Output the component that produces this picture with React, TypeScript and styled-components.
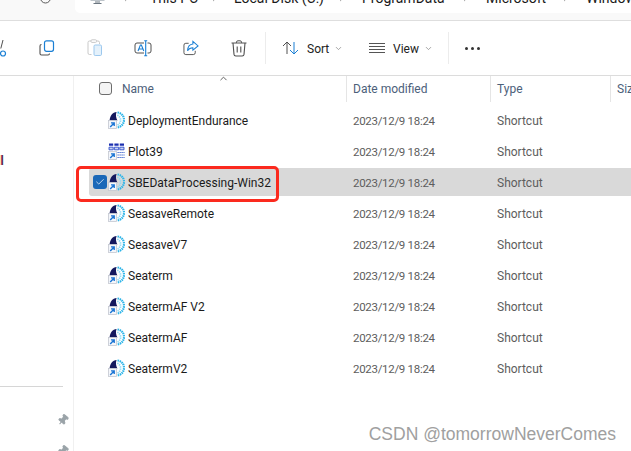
import React from "react";
import styled, { createGlobalStyle } from "styled-components";
import { ChevronDown, ChevronUp, ChevronRight, Check, Pin } from "lucide-react";

const Global = createGlobalStyle`
  html, body { margin: 0; padding: 0; background: #fff; overflow: hidden; }
  body { font-family: Roboto, "Open Sans", "Liberation Sans", sans-serif; }
`;

const Page = styled.div`
  position: relative;
  width: 631px;
  height: 451px;
  overflow: hidden;
  display: flex;
  flex-direction: column;
  background: #fff;
  color: #1b1b1b;
`;

const AddressBand = styled.div`
  height: 20px;
  flex: none;
  background: #f9f9f9;
  border-bottom: 1px solid #dedede;
  display: flex;
  align-items: flex-start;
  overflow: hidden;
`;

const RefreshSlot = styled.div`
  width: 75px;
  flex: none;
  padding-left: 40px;
  box-sizing: border-box;
  margin-top: -8px;
  color: #555;
  display: flex;
`;

const AddressBox = styled.div`
  flex: 1;
  min-width: 0;
  height: 13px;
  background: #fff;
  border-bottom-left-radius: 5px;
  padding-left: 15px;
  display: flex;
  align-items: flex-start;
  overflow: hidden;
  font-size: 14px;
  line-height: 13px;
  white-space: nowrap;
`;

const PcSlot = styled.div`
  width: 15px;
  flex: none;
  margin-top: -9px;
  display: flex;
`;

const Crumb = styled.span<{ $w: number }>`
  flex: none;
  width: ${(p) => p.$w}px;
  margin-top: -8px;
`;

const CrumbSep = styled.div<{ $w: number; $pad?: number }>`
  flex: none;
  width: ${(p) => p.$w}px;
  padding-left: ${(p) => p.$pad ?? 0}px;
  box-sizing: border-box;
  margin-top: -6px;
  color: #444;
  display: flex;
`;

const Toolbar = styled.div`
  height: 54px;
  flex: none;
  display: flex;
  align-items: center;
  border-bottom: 1px solid #dcdcdc;
`;

const CutSlot = styled.div`
  flex: none;
  width: 23px;
  display: flex;
  align-items: center;
  margin-top: 1px;
`;

const ToolIcon = styled.div`
  flex: none;
  width: 48px;
  display: flex;
  justify-content: center;
  align-items: center;
`;

const Sep = styled.div<{ $ml?: number }>`
  width: 1px;
  height: 32px;
  margin-left: ${(p) => p.$ml ?? 0}px;
  background: #ececec;
  flex: none;
`;

const ToolLabel = styled.span`
  font-size: 12px;
  margin-left: 8px;
  padding-top: 2px;
  color: #222;
`;

const ToolBtn = styled.div<{ $w: number }>`
  flex: none;
  width: ${(p) => p.$w}px;
  display: flex;
  align-items: center;
  padding-left: 16px;
  box-sizing: border-box;
`;

const Caret = styled.span`
  display: flex;
  margin-left: 5px;
  color: #888;
`;

const Dots = styled.div`
  display: flex;
  gap: 3px;
  padding-left: 16px;
`;

const Dot = styled.span`
  width: 3px;
  height: 3px;
  border-radius: 50%;
  background: #333;
`;

const Body = styled.div`
  flex: 1;
  display: flex;
  min-height: 0;
`;

const Nav = styled.div`
  width: 74px;
  flex: none;
  box-sizing: border-box;
  border-right: 1px solid #f0f0f0;
  position: relative;
`;

const NavRed = styled.span`
  position: absolute;
  left: 1px;
  top: 78px;
  font-size: 12px;
  line-height: 14px;
  color: #2a1040;
  text-shadow: -1px 0 #c0392b;
`;

const NavRule = styled.div`
  position: absolute;
  left: 0;
  width: 63px;
  top: 310px;
  height: 1px;
  background: #d6d6d6;
`;

const NavPin = styled.div<{ $top: number }>`
  position: absolute;
  left: 57px;
  top: ${(p) => p.$top}px;
  color: #9aa3a8;
  display: flex;
`;

const Main = styled.div`
  flex: 1;
  min-width: 0;
  position: relative;
`;

const HeaderRow = styled.div`
  height: 26px;
  display: flex;
  align-items: center;
  font-size: 12px;
  color: #4c607a;
`;

const HeaderCell = styled.div<{ $w: number; $pad: number; $line?: boolean }>`
  flex: none;
  width: ${(p) => p.$w}px;
  height: 26px;
  box-sizing: border-box;
  padding-left: ${(p) => p.$pad}px;
  padding-bottom: 2px;
  border-right: ${(p) => (p.$line ? "1px solid #e5e5e5" : "none")};
  display: flex;
  align-items: center;
  white-space: nowrap;
  overflow: hidden;
`;

const HeaderText = styled.span`
  padding-top: 2px;
`;

const SortCaret = styled.div`
  position: absolute;
  left: 144px;
  top: -3px;
  color: #555;
  display: flex;
`;

const HeadBox = styled.div`
  width: 13px;
  height: 13px;
  box-sizing: border-box;
  border: 1px solid #6d6d6d;
  border-radius: 3px;
  background: #f4f4f4;
  margin-right: 10px;
  flex: none;
`;

const Rows = styled.div`
  margin-top: 4px;
  display: flex;
  flex-direction: column;
  gap: 3px;
`;

const Row = styled.div<{ $selected?: boolean }>`
  height: 28px;
  margin-left: 15px;
  display: flex;
  align-items: center;
  font-size: 12px;
  background: ${(p) => (p.$selected ? "#d9d9d9" : "transparent")};
  border-radius: 3px 0 0 3px;
  white-space: nowrap;
`;

const CheckCell = styled.div`
  width: 19px;
  flex: none;
  padding-left: 4px;
  box-sizing: border-box;
  display: flex;
`;

const CheckBox = styled.div`
  width: 14px;
  height: 14px;
  border-radius: 3px;
  background: #1a68b8;
  color: #dfeaf6;
  display: flex;
  align-items: center;
  justify-content: center;
`;

const FileName = styled.div`
  width: 245px;
  flex: none;
  display: flex;
  align-items: center;
  gap: 3px;
  color: #1b1b1b;
`;

const FileLabel = styled.span`
  padding-top: 2px;
`;

const Meta = styled.div<{ $w: number; $tight?: boolean }>`
  flex: none;
  width: ${(p) => p.$w}px;
  color: #5d5d5d;
  font-size: ${(p) => (p.$tight ? "11.5px" : "12px")};
  letter-spacing: ${(p) => (p.$tight ? "-0.3px" : "0")};
  padding-top: 1px;
`;

const Highlight = styled.div`
  position: absolute;
  left: 2px;
  top: 90px;
  width: 203px;
  height: 36px;
  box-sizing: border-box;
  border: 3px solid #fb2a1e;
  border-radius: 5px;
`;

const Watermark = styled.div`
  position: absolute;
  right: 15px;
  top: 424px;
  font-family: "Liberation Sans", Arial, sans-serif;
  font-size: 17.5px;
  color: #a0a0a0;
  white-space: nowrap;
`;

const ShortcutBadge = () => (
  <>
    <rect x="0.5" y="9.5" width="8" height="8" fill="#f4f6fa" stroke="#c4c8d0" strokeWidth="0.8" />
    <path d="M2.2 16l3.4-3.4M3 11.9h3.2v3.2" fill="none" stroke="#1a74d4" strokeWidth="1.4" />
  </>
);

const SbeIcon = () => (
  <svg width="17" height="18" viewBox="0 0 17 18">
    <path d="M8.6 1C4.6 1.4 2 4.6 1.6 9.5L9.4 9.5C8 7 7.4 3.6 8.6 1Z" fill="#14185e" />
    <path d="M9.5 1.5C13 1.8 16 4.8 16 8.8 16 13 13 15.8 9.5 16.4" fill="none" stroke="#2cb4e8" strokeWidth="2.2" strokeDasharray="1.5 0.7" />
    <path d="M9.4 4C11 5 12.6 7 12.6 9 12.6 11 11.4 13 9.6 14.2" fill="none" stroke="#8ad8f4" strokeWidth="1.8" strokeDasharray="1.3 0.9" />
    <ShortcutBadge />
  </svg>
);

const PlotIcon = () => (
  <svg width="17" height="18" viewBox="0 0 17 18">
    <path d="M1 1.5h4.2v2.2H1zM6.4 1.5h4.2v2.2H6.4zM11.8 1.5H16v2.2h-4.2z" fill="#1b2fb0" />
    <path d="M1 5.2h4.2v2.6H1zM6.4 5.2h4.2v2.6H6.4zM11.8 5.2H16v2.6h-4.2z" fill="#c8d4f4" stroke="#2040c8" strokeWidth="0.8" />
    <path d="M9.5 10.5H16.5M9.5 13H16.5M9.5 15.5H16.5" stroke="#2a55c8" strokeWidth="1.1" strokeDasharray="1.2 0.8" />
    <ShortcutBadge />
  </svg>
);

const RefreshIcon = () => (
  <svg width="11" height="12" viewBox="0 0 11 12" fill="none">
    <circle cx="5.5" cy="6" r="5" stroke="#5a5a5a" strokeWidth="1" />
  </svg>
);

const PcIcon = () => (
  <svg width="15" height="13" viewBox="0 0 15 13" fill="none">
    <rect x="0.5" y="0.5" width="14" height="9" fill="#7d8b96" />
    <path d="M5 11h5M3.5 12.5h8" stroke="#6b7680" strokeWidth="1.2" />
  </svg>
);

const PasteIcon = () => (
  <svg width="16" height="18" viewBox="0 0 16 18" fill="none">
    <path d="M4.5 15.5H2.5A1.5 1.5 0 0 1 1 14V3.5A1.5 1.5 0 0 1 2.5 2H11A1.5 1.5 0 0 1 12.5 3.5V5" stroke="#c9c9c9" strokeWidth="1" />
    <rect x="4" y="0.8" width="5.5" height="2.6" rx="1" stroke="#c9c9c9" fill="#fff" />
    <rect x="7" y="6" width="7.5" height="10.5" rx="1.2" stroke="#9cc8ee" fill="#e4f1fb" />
  </svg>
);

const CopyIcon = () => (
  <svg width="16" height="16" viewBox="0 0 16 16" fill="none">
    <path d="M2.5 4.5A1.5 1.5 0 0 0 1 6v7.5A1.5 1.5 0 0 0 2.5 15h6.5A1.5 1.5 0 0 0 10.5 13.5" stroke="#505050" strokeWidth="1.1" />
    <rect x="5.5" y="0.8" width="9" height="10.5" rx="2" stroke="#1a7fd4" strokeWidth="1.2" />
  </svg>
);

const RenameIcon = () => (
  <svg width="18" height="17" viewBox="0 0 18 17" fill="none">
    <path d="M10 3H3A2 2 0 0 0 1 5V11A2 2 0 0 0 3 13H10M13.5 3H15A2 2 0 0 1 17 5V11A2 2 0 0 1 15 13H13.5" stroke="#505050" strokeWidth="1" />
    <path d="M4 11L6.4 5H7.4L9.8 11M5 9h3.8" stroke="#1a7fd4" strokeWidth="1.1" />
    <path d="M11.7 1V15.5M10.2 .7H13.2M10.2 15.8H13.2" stroke="#1a7fd4" strokeWidth="1.1" />
  </svg>
);

const ShareIcon = () => (
  <svg width="16" height="16" viewBox="0 0 17 16" fill="none">
    <path d="M6 3H3A2 2 0 0 0 1 5V13A2 2 0 0 0 3 15H11A2 2 0 0 0 13 13V11" stroke="#505050" strokeWidth="1" />
    <path d="M10.5 1L16 5.8 10.5 10.4V7.8C7.5 7.8 6 9 4.8 11 5 7 7 4 10.5 3.7Z" stroke="#1a7fd4" strokeWidth="1.1" />
  </svg>
);

const TrashIcon = () => (
  <svg width="16" height="17" viewBox="0 0 16 17" fill="none">
    <path d="M0.5 3h15M5.5 3V2.2A1.4 1.4 0 0 1 6.9 .8H9.1A1.4 1.4 0 0 1 10.5 2.2V3" stroke="#505050" strokeWidth="1" />
    <path d="M2 3L3 14.4A1.8 1.8 0 0 0 4.8 16H11.2A1.8 1.8 0 0 0 13 14.4L14 3" stroke="#505050" strokeWidth="1.1" />
    <path d="M6.2 6.5v6M9.8 6.5v6" stroke="#505050" strokeWidth="1.1" />
  </svg>
);

const CutIcon = () => (
  <svg width="8" height="18" viewBox="0 0 8 18" fill="none">
    <path d="M3 0L0.8 8.5" stroke="#505050" strokeWidth="1" />
    <circle cx="3" cy="13.5" r="2.5" stroke="#1a7fd4" strokeWidth="1.2" />
  </svg>
);

const SortIcon = () => (
  <svg width="17" height="14" viewBox="0 0 17 14" fill="none">
    <path d="M5 13V1M1 5l4-4 4 4" stroke="#505050" strokeWidth="1" />
    <path d="M12 1v12M8 9l4 4 4-4" stroke="#1a7fd4" strokeWidth="1" />
  </svg>
);

const ViewIcon = () => (
  <svg width="16" height="10" viewBox="0 0 16 10" fill="none">
    <path d="M0 .5h16M0 3.5h16M0 6.5h16M0 9.5h16" stroke="#555" strokeWidth="1" />
  </svg>
);

const files = ["DeploymentEndurance", "Plot39", "SBEDataProcessing-Win32", "SeasaveRemote", "SeasaveV7", "Seaterm", "SeatermAF V2", "SeatermAF", "SeatermV2"];

const TinyChevron = () => <ChevronRight size={9} strokeWidth={1.4} />;

export default function App() {
  return (
    <Page>
      <Global />
      <AddressBand>
        <RefreshSlot><RefreshIcon /></RefreshSlot>
        <AddressBox>
          <PcSlot><PcIcon /></PcSlot>
          <CrumbSep $w={45} $pad={17}><TinyChevron /></CrumbSep>
          <Crumb $w={60}>This PC</Crumb>
          <CrumbSep $w={24}><TinyChevron /></CrumbSep>
          <Crumb $w={103}>Local Disk (C:)</Crumb>
          <CrumbSep $w={25}><TinyChevron /></CrumbSep>
          <Crumb $w={99}>ProgramData</Crumb>
          <CrumbSep $w={25}><TinyChevron /></CrumbSep>
          <Crumb $w={75}>Microsoft</Crumb>
          <CrumbSep $w={25}><TinyChevron /></CrumbSep>
          <Crumb $w={60}>Windows</Crumb>
        </AddressBox>
      </AddressBand>
      <Toolbar>
        <CutSlot><CutIcon /></CutSlot>
        <ToolIcon><CopyIcon /></ToolIcon>
        <ToolIcon><PasteIcon /></ToolIcon>
        <ToolIcon><RenameIcon /></ToolIcon>
        <ToolIcon><ShareIcon /></ToolIcon>
        <ToolIcon><TrashIcon /></ToolIcon>
        <Sep $ml={2} />
        <ToolBtn $w={87}>
          <SortIcon /><ToolLabel>Sort</ToolLabel><Caret><ChevronDown size={9} /></Caret>
        </ToolBtn>
        <ToolBtn $w={95}>
          <ViewIcon /><ToolLabel>View</ToolLabel><Caret><ChevronDown size={9} /></Caret>
        </ToolBtn>
        <Sep />
        <Dots><Dot /><Dot /><Dot /></Dots>
      </Toolbar>
      <Body>
        <Nav>
          <NavRed>l</NavRed>
          <NavRule />
          <NavPin $top={338}><Pin size={12} fill="currentColor" style={{ transform: "rotate(40deg)" }} /></NavPin>
          <NavPin $top={369}><Pin size={12} fill="currentColor" style={{ transform: "rotate(40deg)" }} /></NavPin>
        </Nav>
        <Main>
          <SortCaret><ChevronUp size={11} /></SortCaret>
          <HeaderRow>
            <HeaderCell $w={273} $pad={25} $line>
              <HeadBox /><HeaderText>Name</HeaderText>
            </HeaderCell>
            <HeaderCell $w={144} $pad={6} $line><HeaderText>Date modified</HeaderText></HeaderCell>
            <HeaderCell $w={120} $pad={6} $line><HeaderText>Type</HeaderText></HeaderCell>
            <HeaderCell $w={20} $pad={6}><HeaderText>Size</HeaderText></HeaderCell>
          </HeaderRow>
          <Rows>
            {files.map((f, i) => (
              <Row key={f} $selected={i === 2}>
                <CheckCell>{i === 2 && <CheckBox><Check size={10} strokeWidth={2} /></CheckBox>}</CheckCell>
                <FileName>{i === 1 ? <PlotIcon /> : <SbeIcon />}<FileLabel>{f}</FileLabel></FileName>
                <Meta $w={144} $tight>2023/12/9 18:24</Meta>
                <Meta $w={120}>Shortcut</Meta>
              </Row>
            ))}
          </Rows>
          <Highlight />
        </Main>
      </Body>
      <Watermark>CSDN @tomorrowNeverComes</Watermark>
    </Page>
  );
}
